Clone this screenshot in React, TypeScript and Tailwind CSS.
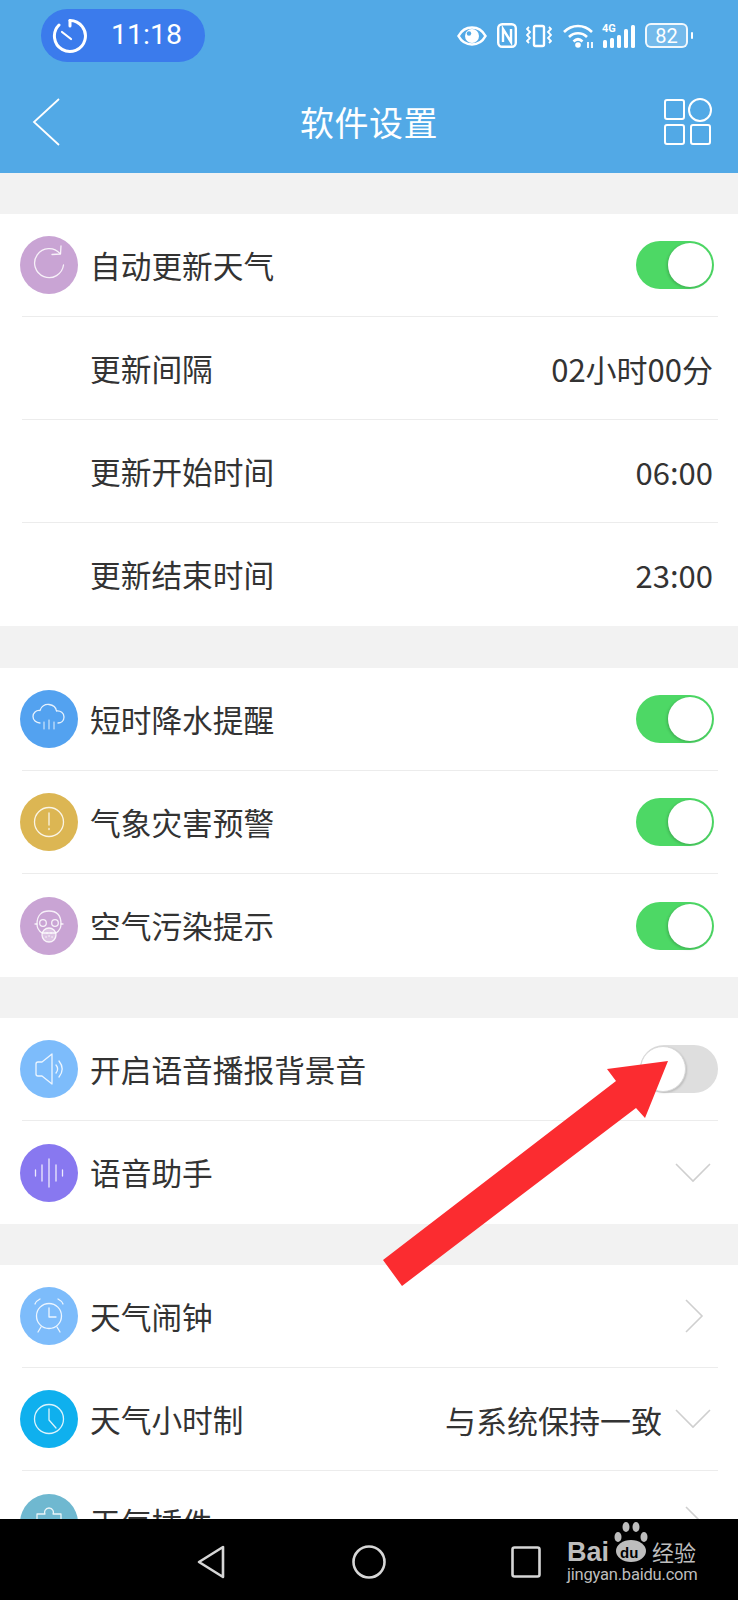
import type { ReactNode } from 'react';

const FONT = "font-['Noto_Sans_CJK_SC','Noto_Sans',sans-serif]";

const IconCircle = ({ color, children }: { color: string; children?: ReactNode }) => (
  <div className={`-ml-[2px] mr-[12px] flex h-[58px] w-[58px] shrink-0 items-center justify-center rounded-full ${color}`}>
    <svg width="58" height="58" viewBox="0 0 58 58" fill="none" stroke="#fff" strokeOpacity="0.85" strokeWidth="1.3" strokeLinecap="round" strokeLinejoin="round">
      {children}
    </svg>
  </div>
);

const Toggle = ({ on }: { on: boolean }) =>
  on ? (
    <div className="mr-[4px] flex h-[48px] w-[78px] items-center justify-end rounded-full bg-[#4dd865] pr-[2px]">
      <div className="h-[44px] w-[44px] rounded-full bg-white shadow-[-1px_1px_3px_rgba(0,0,0,0.2)]" />
    </div>
  ) : (
    <div className="flex h-[48px] w-[78px] items-center justify-start rounded-full bg-[#dedede]">
      <div className="h-[46px] w-[46px] rounded-full border border-[#d8d8d8] bg-white shadow-[1px_1px_2px_rgba(0,0,0,0.15)]" />
    </div>
  );

const ChevronDown = () => (
  <svg className="mr-[7px]" width="36" height="20" viewBox="0 0 36 20" fill="none" stroke="#cfcfcf" strokeWidth="1.6">
    <path d="M1 1l17 17L35 1" />
  </svg>
);

const ChevronRight = () => (
  <svg className="mr-[14px]" width="20" height="34" viewBox="0 0 20 34" fill="none" stroke="#cfcfcf" strokeWidth="1.6">
    <path d="M2 1l16 16L2 33" />
  </svg>
);

const Row = ({ icon, label, right, last }: { icon?: ReactNode; label: string; right?: ReactNode; last?: boolean }) => (
  <div className={`ml-[22px] mr-[20px] flex h-[103px] shrink-0 items-center ${last ? '' : 'border-b border-[#ececec]'} ${icon ? '' : 'pl-[68px]'}`}>
    {icon}
    <span className="flex-1 text-[30.7px] leading-none text-[#333]">{label}</span>
    {right}
  </div>
);

const Value = ({ children }: { children: ReactNode }) => (
  <span className="mr-[5px] text-[31px] leading-none text-[#333]">{children}</span>
);

const Group = ({ children, className = '' }: { children: ReactNode; className?: string }) => (
  <div className={`shrink-0 bg-white ${className}`}>{children}</div>
);

const StatusIcons = () => (
  <div className="mt-[23px] mr-[45px] flex items-center text-white">
    {/* eye */}
    <svg className="mr-[10px]" width="30" height="20" viewBox="0 0 30 20" fill="none">
      <path d="M1.500 10C5 3.500 10 1.500 15 1.500S25 3.500 28.500 10C25 16.500 20 18.500 15 18.500S5 16.500 1.500 10Z" stroke="#fff" strokeWidth="2.600" />
      <circle cx="15" cy="10" r="7" fill="#fff" />
      <circle cx="12" cy="7.500" r="2.200" fill="#52a9e6" />
    </svg>
    {/* nfc */}
    <svg className="mr-[9px]" width="20" height="25" viewBox="0 0 20 25" fill="none" stroke="#fff" strokeWidth="2.400">
      <rect x="1.200" y="1.200" width="17.600" height="22.600" rx="4" />
      <path d="M6 19V6l8 13V6" />
    </svg>
    {/* vibrate */}
    <svg className="mr-[11px]" width="26" height="24" viewBox="0 0 26 24" fill="none" stroke="#fff" strokeWidth="2.400">
      <rect x="8" y="2" width="10" height="20" rx="1.500" />
      <path d="M3 3l-2 2 3 3-3 3 3 3-3 3 2 2" strokeWidth="1.800" />
      <path d="M23 3l2 2-3 3 3 3-3 3 3 3-2 2" strokeWidth="1.800" />
    </svg>
    {/* wifi */}
    <svg className="mr-[7px]" width="32" height="24" viewBox="0 0 32 24" fill="none" stroke="#fff" strokeWidth="2.600">
      <path d="M1 8c8-8 20-8 28 0" />
      <path d="M6 13c5-5 13-5 18 0" />
      <path d="M10.500 17.500c3-3 6-3 9 0" />
      <circle cx="15" cy="21" r="2.800" fill="#fff" stroke="none" />
      <path d="M25 18v6M29 18v6" strokeWidth="1.800" />
    </svg>
    {/* 4G signal */}
    <div className="relative mr-[9px] h-[24px] w-[34px]">
      <span className="absolute left-0 top-[-1px] font-['Roboto',sans-serif] text-[11px] font-bold leading-none">4G</span>
      <svg className="absolute inset-0" width="34" height="24" viewBox="0 0 34 24" fill="#fff">
        <rect x="1" y="16" width="4" height="8" rx="1.500" />
        <rect x="8" y="14" width="4" height="10" rx="1.500" />
        <rect x="15" y="11" width="4" height="13" rx="1.500" />
        <rect x="22" y="5" width="4" height="19" rx="1.500" />
        <rect x="29" y="1" width="4" height="23" rx="1.500" />
      </svg>
    </div>
    {/* battery */}
    <div className="flex h-[25px] w-[43px] items-center justify-center rounded-[6px] border-2 border-white/90 bg-white/20 font-['Roboto',sans-serif] text-[20px] leading-none">
      82
    </div>
    <div className="ml-[3px] h-[7px] w-[2px] rounded-full bg-white" />
  </div>
);

const Header = () => (
  <div className="h-[173px] shrink-0 bg-[#52a9e6] text-white">
    <div className="flex h-[77px] items-start justify-between">
      <div className="ml-[41px] mt-[9px] flex h-[53px] w-[164px] items-center rounded-full bg-[#3b7bec]">
        <svg className="ml-[11px]" width="36" height="38" viewBox="0 0 36 38" fill="none" stroke="#fff" strokeWidth="3" strokeLinecap="round">
          <path d="M18 3.500A15.500 15.500 0 1 1 7 8" />
          <path d="M18 3.500V9" />
          <path d="M10 15l9 7" strokeWidth="2.200" />
        </svg>
        <span className="ml-[23px] font-['Roboto',sans-serif] text-[28.500px] leading-none">11:18</span>
      </div>
      <StatusIcons />
    </div>
    <div className="grid h-[90px] grid-cols-[1fr_auto_1fr] items-center">
      <svg className="ml-[32px]" width="28" height="48" viewBox="0 0 28 48" fill="none" stroke="#fff" strokeWidth="1.800">
        <path d="M27 1L2 24l25 23" />
      </svg>
      <span className="text-[34px] leading-none tracking-[0.5px]">软件设置</span>
      <svg className="mr-[26px] justify-self-end" width="48" height="48" viewBox="0 0 48 48" fill="none" stroke="#fff" strokeWidth="2">
        <rect x="1" y="2" width="19" height="19" rx="2" />
        <circle cx="36" cy="12" r="11" />
        <rect x="1" y="27" width="19" height="19" rx="2" />
        <rect x="27" y="27" width="19" height="19" rx="2" />
      </svg>
    </div>
  </div>
);

const NavBar = () => (
  <div className="relative flex h-[81px] shrink-0 items-center bg-black pl-[197px]">
    <svg width="28" height="34" viewBox="0 0 28 34" fill="none" stroke="#d6d6d6" strokeWidth="2.600" strokeLinejoin="round" className="mt-[5px]">
      <path d="M26 2v30L2 17Z" />
    </svg>
    <svg width="34" height="34" viewBox="0 0 34 34" fill="none" stroke="#d6d6d6" strokeWidth="2.600" className="ml-[127px] mt-[5px]">
      <circle cx="17" cy="17" r="15.500" />
    </svg>
    <svg width="30" height="32" viewBox="0 0 30 32" fill="none" stroke="#d6d6d6" strokeWidth="2.600" className="ml-[125px] mt-[5px]">
      <rect x="1.500" y="1.500" width="27" height="29" rx="2" />
    </svg>
    {/* watermark */}
    <div className="absolute left-[567px] top-[2px] h-[64px] w-[132px] text-[#bdbdbd]">
      <span className="absolute left-0 top-[18px] font-['Liberation_Sans',sans-serif] text-[27px] font-bold leading-none">Bai</span>
      <svg className="absolute left-[43px] top-0" width="42" height="44" viewBox="0 0 42 44" fill="#bdbdbd">
        <ellipse cx="8" cy="16" rx="3.500" ry="5" />
        <ellipse cx="16" cy="6" rx="3.500" ry="5" />
        <ellipse cx="26" cy="6" rx="3.500" ry="5" />
        <ellipse cx="34" cy="16" rx="3.500" ry="5" />
        <ellipse cx="21" cy="30" rx="15" ry="11" />
      </svg>
      <span className="absolute left-[53px] top-[24px] font-['Liberation_Sans',sans-serif] text-[15px] font-bold leading-none text-black">du</span>
      <span className="absolute left-[85px] top-[19px] text-[22px] leading-none">经验</span>
      <span className="absolute left-0 top-[46px] font-['Roboto',sans-serif] text-[16.500px] leading-none tracking-[-0.200px]">jingyan.baidu.com</span>
    </div>
  </div>
);

// red arrow annotation drawn on top of the screenshot
const RedArrow = () => (
  <svg className="pointer-events-none absolute left-[383px] top-[1061px]" width="285" height="225" viewBox="383 1061 285 225" fill="#fb2c30">
    <polygon points="668,1061 607,1069 616,1081 383,1260 402,1286 636,1108 645,1118" />
  </svg>
);

export default function App() {
  return (
    <div className={`relative flex h-[1600px] w-[738px] flex-col overflow-hidden bg-[#f2f2f2] ${FONT}`}>
      <Header />
      <div className="flex min-h-0 flex-1 flex-col overflow-hidden">
        <Group className="mt-[41px]">
          <Row
            label="自动更新天气"
            right={<Toggle on />}
            icon={
              <IconCircle color="bg-[#c9a4d4]">
                <path d="M40 17.500A14.500 14.500 0 1 0 43.500 29" />
                <path d="M32 18.500l8.500-.5.500-8" />
              </IconCircle>
            }
          />
          <Row label="更新间隔" right={<Value>02小时00分</Value>} />
          <Row label="更新开始时间" right={<Value>06:00</Value>} />
          <Row label="更新结束时间" right={<Value>23:00</Value>} last />
        </Group>
        <Group className="mt-[42px]">
          <Row
            label="短时降水提醒"
            right={<Toggle on />}
            icon={
              <IconCircle color="bg-[#53a2f0]">
                <path d="M20 33c-4 0-7-3-7-6.500s3-6.500 7-6c1-4 5-6.500 9-6s7 3 7.500 6.500c4-.5 7.500 2 7.500 6s-3 6-6 6" />
                <path d="M24 32v7M29 30v9M34 32v7" strokeWidth="1" />
              </IconCircle>
            }
          />
          <Row
            label="气象灾害预警"
            right={<Toggle on />}
            icon={
              <IconCircle color="bg-[#dcb653]">
                <circle cx="29" cy="29" r="14.500" />
                <path d="M29 20v12M29 35.500v1" />
              </IconCircle>
            }
          />
          <Row
            label="空气污染提示"
            right={<Toggle on />}
            last
            icon={
              <IconCircle color="bg-[#c9a4d4]">
                <path d="M17 27c0-9 5-13 12-13s12 4 12 13c0 4-2 7-5 9H22c-3-2-5-5-5-9Z" />
                <circle cx="23" cy="26" r="3.300" />
                <circle cx="35" cy="26" r="3.300" />
                <circle cx="29" cy="38" r="7" fill="#fff" fillOpacity="0.35" />
                <path d="M27 36h.1M31 36h.1M29 39h.1M26 40h.1M32 40h.1" strokeWidth="1.500" />
                <path d="M17 27h-2M41 27h2" />
              </IconCircle>
            }
          />
        </Group>
        <Group className="mt-[41px]">
          <Row
            label="开启语音播报背景音"
            right={<Toggle on={false} />}
            icon={
              <IconCircle color="bg-[#7dbcfb]">
                <path d="M16 24c0-1 1-2 2-2h4l10-8v30l-10-8h-4c-1 0-2-1-2-2Z" />
                <path d="M36 25c2 2.500 2 5.500 0 8M39 21c4 5 4 11 0 16" />
              </IconCircle>
            }
          />
          <Row
            label="语音助手"
            right={<ChevronDown />}
            last
            icon={
              <IconCircle color="bg-[#8878f0]">
                <path d="M29 15v28M22 21v16M36 21v16M15.500 26v6M42.500 26v6" />
              </IconCircle>
            }
          />
        </Group>
        <Group className="mt-[41px] flex-1">
          <Row
            label="天气闹钟"
            right={<ChevronRight />}
            icon={
              <IconCircle color="bg-[#7dbcfb]">
                <circle cx="29" cy="29" r="12.500" />
                <path d="M29 21v9h7M21 40l-3 5M37 40l3 5M15 17c1-3 3-4 5-5M43 17c-1-3-3-4-5-5" />
              </IconCircle>
            }
          />
          <Row
            label="天气小时制"
            right={
              <>
                <span className="mr-[13px] text-[31px] leading-none text-[#333]">与系统保持一致</span>
                <ChevronDown />
              </>
            }
            icon={
              <IconCircle color="bg-[#0fb0ee]">
                <circle cx="29" cy="29" r="14.500" />
                <path d="M29 19v11l7 8" />
              </IconCircle>
            }
          />
          <Row
            label="天气插件"
            right={<ChevronRight />}
            last
            icon={
              <IconCircle color="bg-[#6fb8d0]">
                <path d="M25 20c-1-2 0-6 4-6s5 4 4 6h8v8H17v-8Z" />
              </IconCircle>
            }
          />
        </Group>
      </div>
      <NavBar />
      <RedArrow />
    </div>
  );
}
